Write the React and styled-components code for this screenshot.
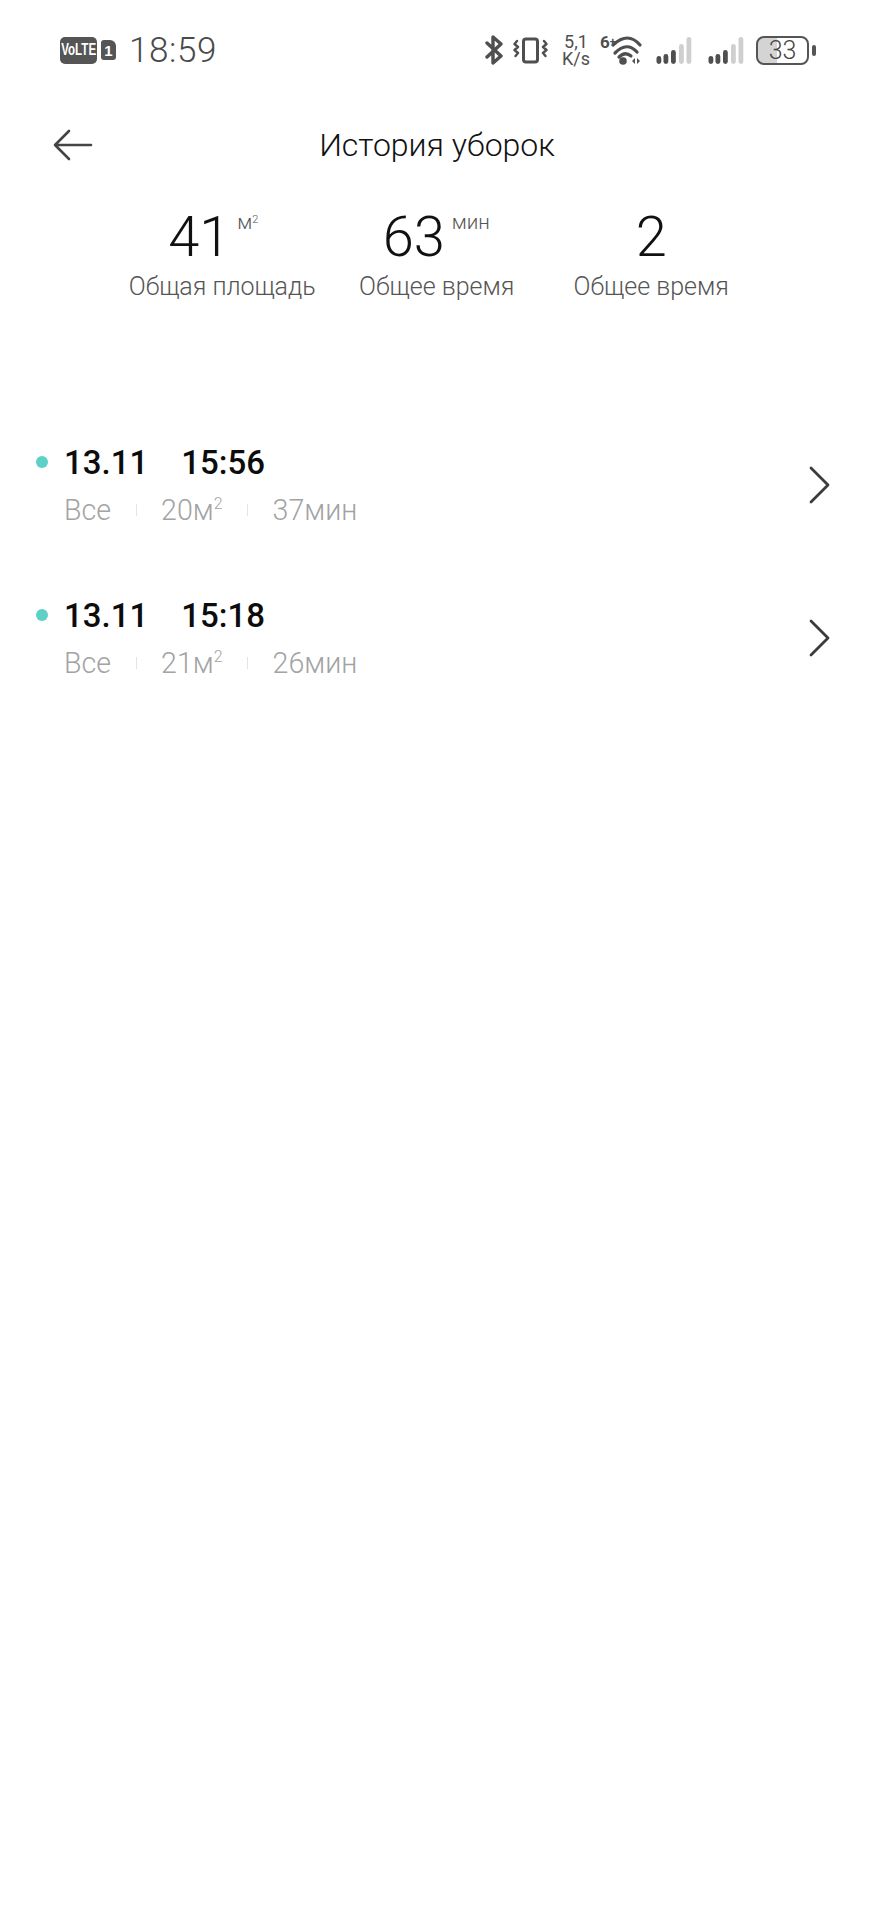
import React from 'react';
import styled, { createGlobalStyle } from 'styled-components';

const GlobalStyle = createGlobalStyle`
  html, body {
    margin: 0;
    padding: 0;
    background: #fff;
    font-family: Roboto, "Noto Sans", sans-serif;
  }
  * { box-sizing: border-box; }
`;

const Page = styled.div`
  width: 874px;
  height: 1920px;
  background: #fff;
  display: flex;
  flex-direction: column;
`;

const StatusBar = styled.div`
  height: 100px;
  padding: 0 58px 0 60px;
  display: flex;
  align-items: center;
  justify-content: space-between;
  color: #4f4f4f;
`;

const StatusLeft = styled.div`
  display: flex;
  align-items: center;
`;

const VolteBadge = styled.span`
  width: 37px;
  height: 27px;
  border-radius: 5px;
  background: #555;
  color: #fff;
  display: flex;
  align-items: center;
  justify-content: center;
`;

const VolteText = styled.span`
  font: 700 17px "Liberation Sans", sans-serif;
  transform: scaleX(0.68);
  white-space: nowrap;
`;

const SimBadge = styled.span`
  width: 15px;
  height: 20px;
  margin-left: 4px;
  border-radius: 3px 6px 3px 3px;
  background: #555;
  color: #fff;
  font: 700 15px "Liberation Sans", sans-serif;
  display: flex;
  align-items: center;
  justify-content: center;
`;

const Clock = styled.span`
  margin-left: 13px;
  font-size: 35px;
  font-weight: 300;
  letter-spacing: 0.6px;
  color: #4a4a4a;
`;

const StatusRight = styled.div`
  display: flex;
  align-items: center;
`;

const StatusSlot = styled.span`
  display: flex;
  margin-left: ${(props) => props.$gap}px;
`;

const Speed = styled.span`
  width: 28px;
  margin-left: 14px;
  font-size: 18px;
  line-height: 17px;
  text-align: center;
  white-space: nowrap;
  color: #4f4f4f;
`;

const BatteryBox = styled.span`
  width: 53px;
  height: 29px;
  margin-left: 12px;
  border: 2px solid #555;
  border-radius: 8px;
  display: flex;
  align-items: center;
  justify-content: center;
  font-size: 25px;
  font-weight: 300;
  color: #444;
  background: linear-gradient(to right, #d4d4d4 38%, #fff 38%);
`;

const BatteryCap = styled.span`
  width: 4px;
  height: 11px;
  margin-left: 3px;
  border-radius: 2px;
  background: #555;
`;

const Header = styled.div`
  height: 90px;
  position: relative;
  display: flex;
  align-items: center;
  justify-content: center;
`;

const BackButton = styled.span`
  position: absolute;
  left: 53px;
  top: 29px;
  display: flex;
`;

const Title = styled.h1`
  margin: 0;
  font-size: 32px;
  font-weight: 300;
  color: #111;
`;

const Stats = styled.div`
  padding: 0 115px;
  margin-top: 13px;
  display: grid;
  grid-template-columns: repeat(3, 214.5px);
`;

const Stat = styled.div`
  display: flex;
  flex-direction: column;
  align-items: center;
`;

const StatTop = styled.div`
  display: flex;
  align-items: flex-start;
  column-gap: 7px;
`;

const StatValue = styled.div`
  font-size: 56px;
  line-height: 68px;
  font-weight: 300;
  color: #111;
`;

const StatUnit = styled.span`
  width: 39px;
  margin-top: 8px;
  font-size: 20.5px;
  line-height: 22px;
  font-weight: 300;
  color: #555;
  white-space: nowrap;
  sup {
    font-size: 11px;
    line-height: 0;
    vertical-align: 6px;
  }
`;

const StatLabel = styled.div`
  font-size: 25px;
  line-height: 32px;
  font-weight: 300;
  color: #555;
`;

const List = styled.div`
  margin-top: 130px;
  display: flex;
  flex-direction: column;
`;

const Row = styled.div`
  height: 152.5px;
  padding: 0 44px 0 36px;
  display: flex;
  align-items: flex-start;
`;

const Dot = styled.span`
  width: 12px;
  height: 12px;
  margin-top: 23px;
  border-radius: 50%;
  background: #5fd0c8;
`;

const RowBody = styled.div`
  margin-left: 16px;
  flex: 1;
`;

const RowTitle = styled.div`
  display: flex;
  column-gap: 33px;
  font-size: 33px;
  line-height: 59px;
  font-weight: 500;
  color: #0c0c0c;
`;

const RowMeta = styled.div`
  display: flex;
  align-items: center;
  font-size: 28.6px;
  line-height: 36px;
  font-weight: 300;
  color: #a3a3a3;
  sup {
    font-size: 16px;
    line-height: 0;
    vertical-align: 11px;
  }
`;

const MetaDivider = styled.span`
  width: 1px;
  height: 12px;
  margin: 0 24.5px;
  background: #e4e4e4;
`;

const Chevron = styled.span`
  margin-top: 33px;
  display: flex;
`;

const Bluetooth = () => (
  <svg width="18" height="30" viewBox="0 0 18 30" fill="none" stroke="#4f4f4f" strokeWidth="3.4" strokeLinejoin="round" strokeLinecap="round">
    <path d="M2 8 16 21 8 28V2l8 7L2 22" />
  </svg>
);

const Vibrate = () => (
  <svg width="35" height="30" viewBox="0 0 35 30" fill="none" stroke="#4f4f4f" strokeWidth="2.4" strokeLinecap="round" strokeLinejoin="round">
    <rect x="10.5" y="4" width="14" height="23" rx="2.5" strokeWidth="3" />
    <path d="M4 6 1.5 9 5 12 1.5 15 5 18 2.5 21M31 6l2.5 3L30 12l3.5 3-3.5 3 2.5 3" />
  </svg>
);

const Wifi = () => (
  <svg width="42" height="40" viewBox="0 -4 42 40" fill="none">
    <text x="0" y="14" fontSize="17" fontWeight="700" fontFamily="Roboto, sans-serif" fill="#4f4f4f">
      6<tspan fontSize="11" dy="-3">+</tspan>
    </text>
    <g stroke="#4f4f4f" strokeWidth="3.2" strokeLinecap="round">
      <path d="M13 11Q28-3 40 11" />
      <path d="M15 19Q27 7 37 18" />
      <path d="M19 23Q25 17 31 22" />
    </g>
    <circle cx="23" cy="27" r="3.8" fill="#4f4f4f" />
    <path d="M35 24v6l-3-3zM37 24v6l3-3z" fill="#4f4f4f" />
  </svg>
);

const signalBars = [
  { x: 0.5, h: 8, color: '#4f4f4f' },
  { x: 7.5, h: 10, color: '#4f4f4f' },
  { x: 15, h: 14, color: '#4f4f4f' },
  { x: 23, h: 20, color: '#cfcfcf' },
  { x: 30.5, h: 27, color: '#cfcfcf' },
];

const Signal = () => (
  <svg width="36" height="30" viewBox="0 0 36 30">
    {signalBars.map((bar) => (
      <rect key={bar.x} x={bar.x} y={29 - bar.h} width="4.8" height={bar.h} rx="2.4" fill={bar.color} />
    ))}
  </svg>
);

const ArrowLeft = () => (
  <svg width="40" height="32" viewBox="0 0 40 32" fill="none" stroke="#444" strokeWidth="2.6" strokeLinecap="round" strokeLinejoin="round">
    <path d="M16 2 2 16l14 14M2 16h36" />
  </svg>
);

const ChevronRight = () => (
  <svg width="22" height="38" viewBox="0 0 22 38" fill="none" stroke="#3c3c3c" strokeWidth="2.8" strokeLinecap="round" strokeLinejoin="round">
    <path d="M3 2l17 17L3 36" />
  </svg>
);

const stats = [
  { value: '41', unit: <>м<sup>2</sup></>, label: 'Общая площадь' },
  { value: '63', unit: 'мин', label: 'Общее время' },
  { value: '2', label: 'Общее время' },
];

const cleanings = [
  { date: '13.11', time: '15:56', area: '20', minutes: '37' },
  { date: '13.11', time: '15:18', area: '21', minutes: '26' },
];

export default function App() {
  return (
    <Page>
      <GlobalStyle />
      <StatusBar>
        <StatusLeft>
          <VolteBadge><VolteText>VoLTE</VolteText></VolteBadge>
          <SimBadge>1</SimBadge>
          <Clock>18:59</Clock>
        </StatusLeft>
        <StatusRight>
          <StatusSlot $gap={0}><Bluetooth /></StatusSlot>
          <StatusSlot $gap={10}><Vibrate /></StatusSlot>
          <Speed>5,1<br />K/s</Speed>
          <StatusSlot $gap={10}><Wifi /></StatusSlot>
          <StatusSlot $gap={14}><Signal /></StatusSlot>
          <StatusSlot $gap={16}><Signal /></StatusSlot>
          <BatteryBox>33</BatteryBox>
          <BatteryCap />
        </StatusRight>
      </StatusBar>
      <Header>
        <BackButton><ArrowLeft /></BackButton>
        <Title>История уборок</Title>
      </Header>
      <Stats>
        {stats.map((item, i) => (
          <Stat key={i}>
            <StatTop>
              <StatValue>{item.value}</StatValue>
              {item.unit && <StatUnit>{item.unit}</StatUnit>}
            </StatTop>
            <StatLabel>{item.label}</StatLabel>
          </Stat>
        ))}
      </Stats>
      <List>
        {cleanings.map((item) => (
          <Row key={item.time}>
            <Dot />
            <RowBody>
              <RowTitle>
                <span>{item.date}</span>
                <span>{item.time}</span>
              </RowTitle>
              <RowMeta>
                <span>Все</span>
                <MetaDivider />
                <span>{item.area}м<sup>2</sup></span>
                <MetaDivider />
                <span>{item.minutes}мин</span>
              </RowMeta>
            </RowBody>
            <Chevron><ChevronRight /></Chevron>
          </Row>
        ))}
      </List>
    </Page>
  );
}
